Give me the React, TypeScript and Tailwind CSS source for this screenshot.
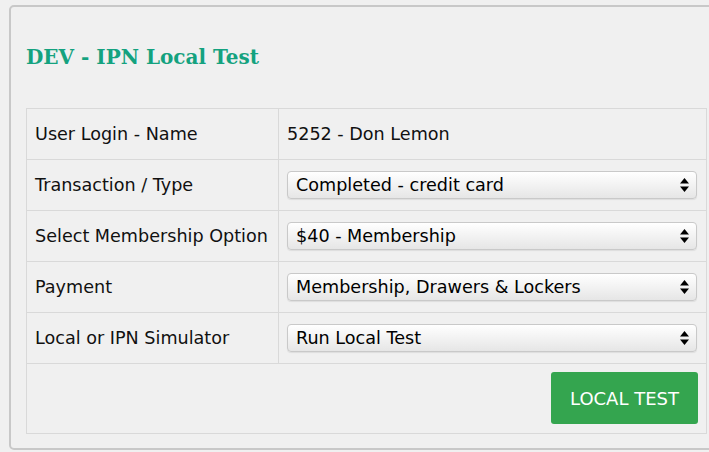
import React from 'react';

const rows = [
  { label: 'Transaction / Type', value: 'Completed - credit card' },
  { label: 'Select Membership Option', value: '$40 - Membership' },
  { label: 'Payment', value: 'Membership, Drawers & Lockers' },
  { label: 'Local or IPN Simulator', value: 'Run Local Test' },
];

function FakeSelect({ value }: { value: string }) {
  return (
    <div className="flex h-[28px] items-center justify-between rounded-[4px] border border-[#c9c9c9] bg-gradient-to-b from-white to-[#e6e6e6] pl-[8px] pr-[7px] shadow-[0_1px_1px_rgba(0,0,0,0.08)]">
      <span className="text-[17.6px] text-black">{value}</span>
      <svg width="9" height="14" viewBox="0 0 9 14" className="text-black">
        <path d="M4.5 0 L9 5.5 H0 Z" fill="currentColor" />
        <path d="M4.5 14 L9 8.5 H0 Z" fill="currentColor" />
      </svg>
    </div>
  );
}

export default function App() {
  return (
    <div className="h-[452px] w-[709px] overflow-hidden bg-[#f0f0f0] font-['DejaVu_Sans',sans-serif]">
      <div className="ml-[9px] mt-[5px] w-[715px] rounded-[5px] border-2 border-[#c8c8c8] bg-[#f0f0f0] px-[15px] pb-[14px]">
        {/* Title */}
        <h2 className="pt-[35px] pb-[36px] font-['DejaVu_Serif',serif] text-[20px] font-bold leading-[30px] text-[#14a27f]">
          DEV - IPN Local Test
        </h2>

        {/* Form table */}
        <table className="w-[681px] border-collapse text-[17.6px] text-[#111]">
          <tbody>
            <tr className="h-[51px]">
              <td className="w-[252px] border border-[#d9d9d9] pl-[8px]">User Login - Name</td>
              <td className="border border-[#d9d9d9] pl-[8px]">5252 - Don Lemon</td>
            </tr>
            {rows.map((row) => (
              <tr key={row.label} className="h-[51px]">
                <td className="border border-[#d9d9d9] pl-[8px]">{row.label}</td>
                <td className="border border-[#d9d9d9] pl-[8px] pr-[9px]">
                  <FakeSelect value={row.value} />
                </td>
              </tr>
            ))}
            <tr className="h-[70px]">
              <td colSpan={2} className="border border-[#d9d9d9] pr-[8px] text-right align-top">
                <button className="mt-[8px] h-[52px] w-[147px] rounded-[3px] bg-[#34a54f] text-[18px] text-white">
                  LOCAL TEST
                </button>
              </td>
            </tr>
          </tbody>
        </table>
      </div>
    </div>
  );
}
